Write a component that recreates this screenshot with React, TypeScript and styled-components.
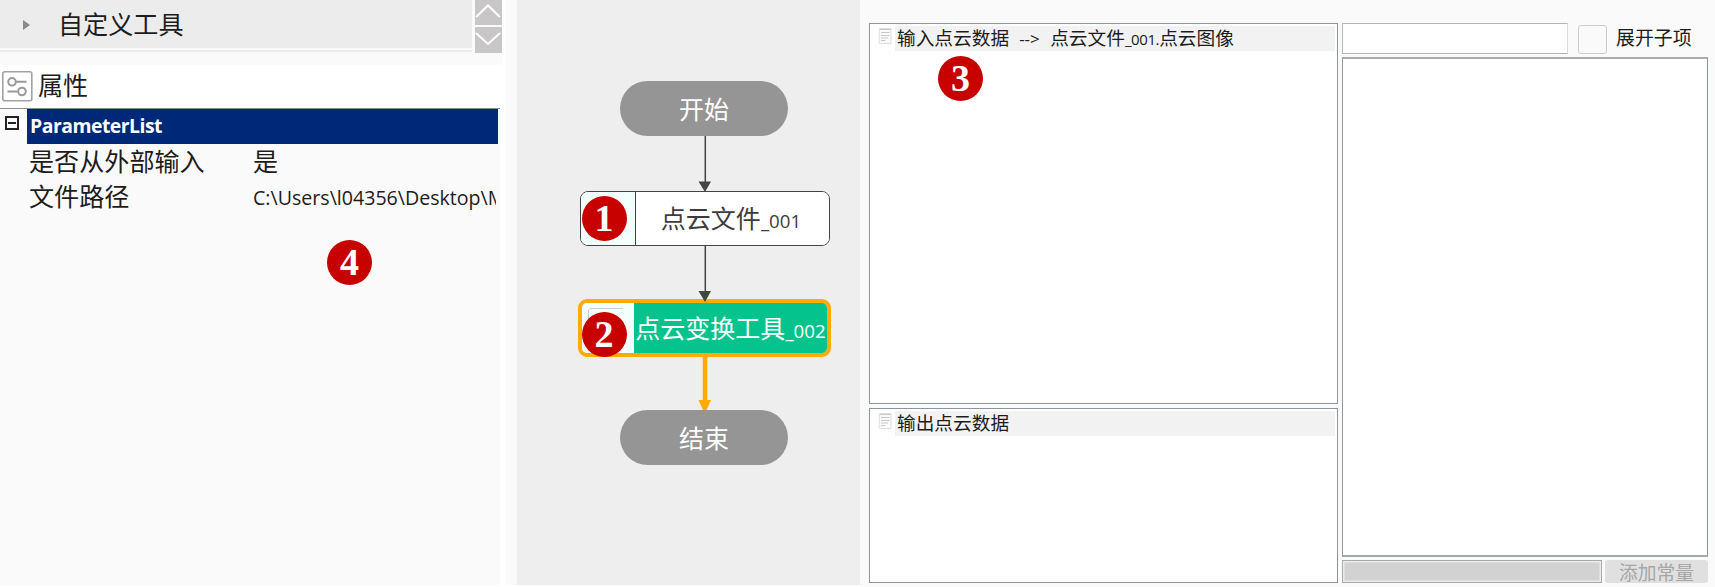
import React from 'react';
import styled, { createGlobalStyle } from 'styled-components';

const GlobalStyle = createGlobalStyle`
  *, *::before, *::after { box-sizing: border-box; }
  body {
    margin: 0;
    background: #fff;
    color: #1c1c1c;
    font-family: "Open Sans", "Noto Sans CJK SC", sans-serif;
    overflow: hidden;
  }
`;

const Page = styled.div`
  position: relative;
  display: flex;
  width: 1715px;
  height: 587px;
  background: #fff;
`;

/* ---------- left: tool list and property grid ---------- */

const SidePanel = styled.aside`
  display: flex;
  flex-direction: column;
  width: 506px;
  height: 585px;
`;

const ToolHeader = styled.div`
  display: flex;
  gap: 3px;
  width: 502px;
  height: 65px;
  background: #fafafa;
`;

const ToolGroup = styled.div`
  display: flex;
  align-items: center;
  width: 472px;
  height: 52px;
  padding: 0 0 5px 23px;
  background: linear-gradient(#ececec 48px, #fafafa 48px, #fafafa 50px, #ececec 50px);
  font-size: 25.1px;
  line-height: 36px;
`;

const ExpandArrow = styled.span`
  border: solid transparent;
  border-width: 5px 0 5px 7px;
  border-left-color: #8a8a8a;
  margin: 2px 28px 0 0;
`;

const Scroller = styled.div`
  display: flex;
  flex-direction: column;
  gap: 2px;
`;

const ScrollButton = styled.button`
  display: block;
  width: 27px;
  height: ${(p: { $h: number }) => p.$h}px;
  padding: 0;
  border: 0;
  background: #c8c6c6;
  line-height: 0;
`;

const PropertyTitle = styled.div`
  display: flex;
  align-items: center;
  gap: 5px;
  height: 43px;
  padding: 0 0 1px 2px;
  font-size: 25.1px;
  line-height: 36px;
`;

const TitleText = styled.span`
  padding-bottom: 3px;
`;

const PropertyGrid = styled.div`
  width: 500px;
  flex: 1;
  border-top: 1px solid #8c8c8c;
  background: #fafafa;
`;

const GroupRow = styled.div`
  display: flex;
  height: 35px;
`;

const Collapse = styled.span`
  display: flex;
  align-items: center;
  justify-content: center;
  width: 14px;
  height: 14px;
  margin: 7px 8px 0 5px;
  border: 2px solid #222;
  &::before {
    content: '';
    width: 8px;
    height: 2px;
    background: #222;
  }
`;

const GroupName = styled.div`
  width: 471px;
  padding-left: 3px;
  background: #002878;
  color: #fff;
  font-size: 19.4px;
  font-weight: 700;
  line-height: 33px;
  letter-spacing: -0.5px;
`;

const PropertyRow = styled.div`
  display: grid;
  grid-template-columns: 224px 243px;
  height: 35px;
  padding-left: 29px;
  align-items: center;
  line-height: 33px;
  font-size: 25.1px;
`;

const PathValue = styled.span`
  padding-top: 2px;
  overflow: hidden;
  white-space: nowrap;
  font-size: 19.6px;
`;

/* ---------- middle: flow canvas ---------- */

const Canvas = styled.main`
  position: relative;
  width: 343px;
  height: 585px;
  margin-left: 11px;
  box-shadow: -11px 0 0 #fafafa;
  background: #eee;
`;

const Links = styled.svg`
  position: absolute;
  inset: 0;
`;

const Terminal = styled.div<{ $top: number }>`
  position: absolute;
  left: 103px;
  top: ${p => p.$top}px;
  width: 168px;
  height: 55px;
  border-radius: 28px;
  background: #959595;
  color: #fff;
  font-size: 25px;
  line-height: 56px;
  text-align: center;
`;

const Node = styled.div<{ $top: number; $active?: boolean }>`
  position: absolute;
  left: ${p => (p.$active ? 61 : 63)}px;
  top: ${p => p.$top}px;
  display: flex;
  width: ${p => (p.$active ? 253 : 250)}px;
  height: ${p => (p.$active ? 58 : 55)}px;
  border: ${p => (p.$active ? '4px solid #ffab00' : '1.5px solid #444')};
  border-radius: ${p => (p.$active ? 9 : 8)}px;
  overflow: hidden;
  background: #fff;
`;

const NodeIcon = styled.div<{ $active?: boolean }>`
  flex: none;
  width: ${p => (p.$active ? 52 : 55)}px;
  border-right: ${p => (p.$active ? '0' : '1.5px solid #444')};
  background: #f3fffc;
`;

const NodeLabel = styled.div<{ $active?: boolean }>`
  flex: 1;
  display: flex;
  align-items: baseline;
  justify-content: center;
  padding-right: ${p => (p.$active ? 0 : 3)}px;
  white-space: nowrap;
  background: ${p => (p.$active ? '#04c38d' : '#fff')};
  color: ${p => (p.$active ? '#fff' : '#3c3c3c')};
  font-size: 25px;
  line-height: ${p => (p.$active ? 50 : 53)}px;
`;

const Suffix = styled.span`
  font-size: 18.7px;
`;

/* ---------- right: data binding ---------- */

const DataPanel = styled.section`
  display: flex;
  gap: 4px;
  width: 855px;
  height: 587px;
  padding: 23px 0 0 9px;
  background: #fafafa;
`;

const Trees = styled.div`
  display: flex;
  flex-direction: column;
  gap: 4px;
  width: 469px;
`;

const Tree = styled.div<{ $h: number }>`
  height: ${p => p.$h}px;
  padding: 2px 2px 0 8px;
  border: 1px solid #8f959f;
  background: #fff;
`;

const TreeRow = styled.div`
  display: flex;
  gap: 3px;
`;

const TreeLabel = styled.div`
  flex: 1;
  display: flex;
  align-items: baseline;
  height: 25px;
  padding-left: 2px;
  background: #f2f2f2;
  font-size: 18.7px;
  line-height: 24px;
  white-space: pre;
`;

const SmallLatin = styled.span`
  font-size: 15px;
  letter-spacing: -0.4px;
`;

const Arrow = styled.span`
  width: 41px;
  padding-left: 10px;
  font-size: 17px;
`;

const Browser = styled.div`
  display: flex;
  flex-direction: column;
  gap: 3px;
  width: 366px;
`;

const SearchRow = styled.div`
  display: flex;
  align-items: center;
  height: 31px;
`;

const SearchBox = styled.div`
  width: 226px;
  height: 31px;
  border: 1px solid #b4b4b4;
  border-right-color: #dcdcdc;
  background: #fff;
`;

const CheckBox = styled.span`
  width: 29px;
  height: 29px;
  margin: 1px 9px 0 10px;
  border: 1px solid #ccc;
  border-radius: 3px;
  background: #fafafa;
`;

const CheckLabel = styled.span`
  padding-bottom: 1px;
  font-size: 18.9px;
  line-height: 28px;
`;

const ItemList = styled.div`
  height: 500px;
  border: 1px solid #8f959f;
  border-top-width: 2px;
  border-top-color: #a9adb8;
  border-bottom-width: 2px;
  border-bottom-color: #a3a8b0;
  background: #fff;
`;

const ConstantRow = styled.div`
  display: flex;
  gap: 3px;
  height: 23px;
`;

const ConstantInput = styled.div`
  width: 260px;
  border: 1px solid #a8a8a8;
  background: #d2d2d2;
  box-shadow: inset 0 0 0 1.5px #ececec;
`;

const AddButton = styled.button`
  flex: 1;
  padding: 0;
  border: 0;
  border-radius: 3px;
  background: #e0e0e0;
  color: #a6a6a6;
  font: 18.8px/23px "Noto Sans CJK SC", sans-serif;
`;

/* ---------- numbered markers over the panels ---------- */

const Marker = styled.span<{ $x: number; $y: number }>`
  position: absolute;
  left: ${p => p.$x}px;
  top: ${p => p.$y}px;
  width: 45px;
  height: 45px;
  border-radius: 50%;
  background: #c70000;
  color: #fff;
  font: 700 38px/45px "Liberation Serif", serif;
  text-align: center;
`;

const SettingsIcon = () => (
  <svg width="31" height="31" viewBox="0 0 31 31" fill="none" stroke="#999" strokeWidth="2">
    <rect x="0.8" y="0.8" width="29" height="29" rx="2" stroke="#a3a3a3" strokeWidth="1.6" />
    <circle cx="10" cy="10.800" r="3.800" />
    <path d="M14 10.8h10.500M5.500 20.500h10" />
    <circle cx="20" cy="20.500" r="3.800" />
  </svg>
);

const DocIcon = () => (
  <svg width="14" height="20" viewBox="0 0 14 20" fill="none">
    <path d="M1.500 2.500H13V17.500H2.500Q1 17.500 1 16Z" fill="#fafafa" stroke="#dedede" />
    <path d="M2 3.500H13M3 6.500H11.500M3 9.500H11.500M3 12H10M3 14.500H7.500" stroke="#c8c8c8" strokeWidth="1.100" />
  </svg>
);

const Chevron = ({ d, h }: { d: string; h: number }) => (
  <svg width="27" height={h} viewBox={`0 0 27 ${h}`} fill="none" stroke="#fff" strokeWidth="2">
    <path d={d} />
  </svg>
);

export default function App() {
  return (
    <>
      <GlobalStyle />
      <Page>
        <SidePanel>
          <ToolHeader>
            <ToolGroup>
              <ExpandArrow />
              自定义工具
            </ToolGroup>
            <Scroller>
              <ScrollButton $h={25}><Chevron h={25} d="M1 17L13 5.500L25 17" /></ScrollButton>
              <ScrollButton $h={26}><Chevron h={26} d="M1 6L13 17L25 6" /></ScrollButton>
            </Scroller>
          </ToolHeader>
          <PropertyTitle>
            <SettingsIcon />
            <TitleText>属性</TitleText>
          </PropertyTitle>
          <PropertyGrid>
            <GroupRow>
              <Collapse />
              <GroupName>ParameterList</GroupName>
            </GroupRow>
            <PropertyRow>
              <span>是否从外部输入</span>
              <span>是</span>
            </PropertyRow>
            <PropertyRow>
              <span>文件路径</span>
              <PathValue>C:\Users\l04356\Desktop\M</PathValue>
            </PropertyRow>
          </PropertyGrid>
        </SidePanel>

        <Canvas>
          <Terminal $top={81}>开始</Terminal>
          <Node $top={191}>
            <NodeIcon />
            <NodeLabel>点云文件<Suffix>_001</Suffix></NodeLabel>
          </Node>
          <Node $top={299} $active>
            <NodeIcon $active>
              <svg width="44" height="50" viewBox="0 0 44 50" fill="none" stroke="#ccc">
                <path d="M6.500 20V8Q6.500 5.500 9 5.500H41" />
              </svg>
            </NodeIcon>
            <NodeLabel $active>点云变换工具<Suffix>_002</Suffix></NodeLabel>
          </Node>
          <Terminal $top={410}>结束</Terminal>
          <Links width="343" height="585">
            <path d="M188.300 136V185M188.300 245V295" stroke="#444" strokeWidth="1.500" />
            <path d="M181.500 181.500H194L188 192ZM181.500 291H194L188 302Z" fill="#444" />
            <path d="M188 357V404" stroke="#ffab00" strokeWidth="4.500" />
            <path d="M181.500 400H194L189.500 410H186Z" fill="#ffab00" />
          </Links>
        </Canvas>

        <DataPanel>
          <Trees>
            <Tree $h={381}>
              <TreeRow>
                <DocIcon />
                <TreeLabel>
                  输入点云数据<Arrow>--&gt;</Arrow>点云文件<SmallLatin>_001.</SmallLatin>点云图像
                </TreeLabel>
              </TreeRow>
            </Tree>
            <Tree $h={175}>
              <TreeRow>
                <DocIcon />
                <TreeLabel>输出点云数据</TreeLabel>
              </TreeRow>
            </Tree>
          </Trees>
          <Browser>
            <SearchRow>
              <SearchBox />
              <CheckBox />
              <CheckLabel>展开子项</CheckLabel>
            </SearchRow>
            <ItemList />
            <ConstantRow>
              <ConstantInput />
              <AddButton>添加常量</AddButton>
            </ConstantRow>
          </Browser>
        </DataPanel>

        <Marker $x={581.5} $y={196}>1</Marker>
        <Marker $x={581.5} $y={311.5}>2</Marker>
        <Marker $x={938} $y={56}>3</Marker>
        <Marker $x={327} $y={240}>4</Marker>
      </Page>
    </>
  );
}
